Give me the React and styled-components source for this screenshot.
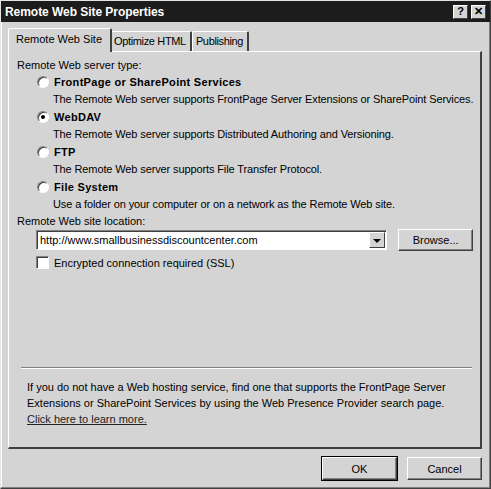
import React from 'react';
import styled, { createGlobalStyle } from 'styled-components';

const GlobalStyle = createGlobalStyle`
  html, body {
    margin: 0;
    padding: 0;
    background: #d4d4d4;
  }
  * {
    box-sizing: border-box;
  }
`;

const Window = styled.div`
  width: 491px;
  height: 489px;
  background: #d4d4d4;
  border: 1px solid #e4e4e4;
  border-right-color: #404040;
  border-bottom-color: #404040;
  box-shadow: inset -1px -1px 0 #808080, inset 1px 1px 0 #ffffff;
  padding: 0 2px 3px 2px;
  display: flex;
  flex-direction: column;
  font-family: 'Liberation Sans', Arial, sans-serif;
  font-size: 11px;
  color: #000;
`;

const TitleBar = styled.div`
  height: 21px;
  margin: 0 -2px;
  background: #1c1c1c;
  display: flex;
  align-items: center;
  justify-content: space-between;
  padding: 0 4px 0 4px;
`;

const Title = styled.div`
  color: #fff;
  font-weight: bold;
  font-size: 12px;
  letter-spacing: -0.05px;
`;

const TitleButtons = styled.div`
  display: flex;
  gap: 3px;
`;

const TitleButton = styled.div`
  width: 15px;
  height: 14px;
  background: #d4d4d4;
  border: 1px solid #fff;
  border-right-color: #404040;
  border-bottom-color: #404040;
  display: flex;
  align-items: center;
  justify-content: center;
  font-weight: bold;
  font-size: 11px;
  line-height: 1;
  color: #000;
`;

const Body = styled.div`
  flex: 1;
  display: flex;
  flex-direction: column;
  padding: 6px 6px 0 5px;
`;

const TabRow = styled.div`
  display: flex;
  align-items: flex-end;
  height: 23px;
  padding-left: 2px;
  position: relative;
  z-index: 1;
`;

const Tab = styled.div`
  height: ${(p) => (p.$active ? '24px' : '20px')};
  padding: ${(p) => (p.$active ? '4px 8px 0 7px' : '3px 4px 0 3px')};
  margin: ${(p) => (p.$active ? '0 -2px -1px -2px' : '0')};
  background: #d4d4d4;
  border-top: 1px solid #fff;
  border-left: 1px solid #fff;
  border-right: 2px solid #404040;
  border-radius: 2px 2px 0 0;
  white-space: nowrap;
  font-size: 11px;
  letter-spacing: ${(p) => (p.$active ? '0' : '-0.35px')};
  position: relative;
  z-index: ${(p) => (p.$active ? 2 : 1)};
`;

const Panel = styled.div`
  height: 398px;
  border: 1px solid #fff;
  border-right: 2px solid #404040;
  border-bottom: 2px solid #404040;
  display: flex;
  flex-direction: column;
  padding: 5px 7px 0 8px;
`;

const Line = styled.div`
  height: ${(p) => p.$h || 16}px;
  line-height: ${(p) => p.$h || 16}px;
  font-size: 11px;
  white-space: nowrap;
  padding-left: ${(p) => p.$indent || 0}px;
  letter-spacing: ${(p) => (p.$indent ? '-0.12px' : '0')};
`;

const RadioRow = styled.label`
  display: flex;
  align-items: center;
  gap: 5px;
  height: 18px;
  padding-left: 20px;
  font-weight: bold;
  font-size: 11px;
  letter-spacing: 0.3px;
  white-space: nowrap;
`;

const Radio = styled.span`
  width: 12px;
  height: 12px;
  border-radius: 50%;
  background: #fff;
  border: 1px solid;
  border-color: #808080 #ffffff #ffffff #808080;
  box-shadow: inset 1px 1px 0 #404040;
  display: flex;
  align-items: center;
  justify-content: center;
  &::after {
    content: '';
    width: 4px;
    height: 4px;
    border-radius: 50%;
    background: ${(p) => (p.$checked ? '#000' : 'transparent')};
  }
`;

const LocationRow = styled.div`
  display: flex;
  align-items: center;
  gap: 11px;
  padding-left: 19px;
`;

const Combo = styled.div`
  width: 353px;
  height: 20px;
  background: #fff;
  border: 1px solid;
  border-color: #808080 #fff #fff #808080;
  box-shadow: inset 1px 1px 0 #404040;
  display: flex;
  align-items: center;
  padding: 0 1px 0 3px;
  font-size: 11px;
`;

const ComboText = styled.span`
  flex: 1;
`;

const DropButton = styled.span`
  width: 16px;
  height: 16px;
  background: #d4d4d4;
  border: 1px solid #fff;
  border-right-color: #404040;
  border-bottom-color: #404040;
  display: flex;
  align-items: center;
  justify-content: center;
  &::after {
    content: '';
    border-left: 4px solid transparent;
    border-right: 4px solid transparent;
    border-top: 4px solid #000;
    margin-top: 1px;
  }
`;

const Button = styled.div`
  width: 75px;
  height: ${(p) => p.$h || 23}px;
  background: #d4d4d4;
  border: 1px solid #fff;
  border-right-color: #404040;
  border-bottom-color: #404040;
  box-shadow: inset -1px -1px 0 #808080;
  outline: ${(p) => (p.$default ? '1px solid #000' : 'none')};
  display: flex;
  align-items: center;
  justify-content: center;
  font-size: 11px;
`;

const CheckRow = styled.label`
  display: flex;
  align-items: center;
  gap: 5px;
  margin-top: 5px;
  padding-left: 19px;
  font-size: 11px;
`;

const CheckBox = styled.span`
  width: 13px;
  height: 13px;
  background: #fff;
  border: 1px solid;
  border-color: #808080 #fff #fff #808080;
  box-shadow: inset 1px 1px 0 #404040;
`;

const Separator = styled.div`
  margin: auto 1px 0 4px;
  border-top: 1px solid #808080;
  border-bottom: 1px solid #fff;
`;

const Footer = styled.div`
  padding: 10px 0 0 10px;
  height: 78px;
`;

const FootText = styled.div`
  font-size: 11px;
  line-height: 16px;
`;

const Link = styled.span`
  display: inline-block;
  font-size: 11px;
  line-height: 16px;
  text-decoration: underline;
  color: #222;
`;

const ButtonBar = styled.div`
  display: flex;
  justify-content: flex-end;
  gap: 10px;
  padding: 8px 0 0 0;
`;

const options = [
  {
    label: 'FrontPage or SharePoint Services',
    desc: 'The Remote Web server supports FrontPage Server Extensions or SharePoint Services.',
  },
  {
    label: 'WebDAV',
    desc: 'The Remote Web server supports Distributed Authoring and Versioning.',
    checked: true,
  },
  { label: 'FTP', desc: 'The Remote Web server supports File Transfer Protocol.' },
  {
    label: 'File System',
    desc: 'Use a folder on your computer or on a network as the Remote Web site.',
  },
];

export default function App() {
  return (
    <>
      <GlobalStyle />
      <Window>
        <TitleBar>
          <Title>Remote Web Site Properties</Title>
          <TitleButtons>
            <TitleButton>?</TitleButton>
            <TitleButton>✕</TitleButton>
          </TitleButtons>
        </TitleBar>
        <Body>
          <TabRow>
            <Tab $active>Remote Web Site</Tab>
            <Tab>Optimize HTML</Tab>
            <Tab>Publishing</Tab>
          </TabRow>
          <Panel>
            <Line $h={16}>Remote Web server type:</Line>
            {options.map((o) => (
              <React.Fragment key={o.label}>
                <RadioRow>
                  <Radio $checked={o.checked} />
                  {o.label}
                </RadioRow>
                <Line $h={17} $indent={36}>
                  {o.desc}
                </Line>
              </React.Fragment>
            ))}
            <Line $h={16}>Remote Web site location:</Line>
            <LocationRow>
              <Combo>
                <ComboText>http://www.smallbusinessdiscountcenter.com</ComboText>
                <DropButton />
              </Combo>
              <Button $h={22}>Browse...</Button>
            </LocationRow>
            <CheckRow>
              <CheckBox />
              Encrypted connection required (SSL)
            </CheckRow>
            <Separator />
            <Footer>
              <FootText>
                If you do not have a Web hosting service, find one that supports the FrontPage Server
                <br />
                Extensions or SharePoint Services by using the Web Presence Provider search page.
              </FootText>
              <Link>Click here to learn more.</Link>
            </Footer>
          </Panel>
          <ButtonBar>
            <Button $default>OK</Button>
            <Button>Cancel</Button>
          </ButtonBar>
        </Body>
      </Window>
    </>
  );
}
